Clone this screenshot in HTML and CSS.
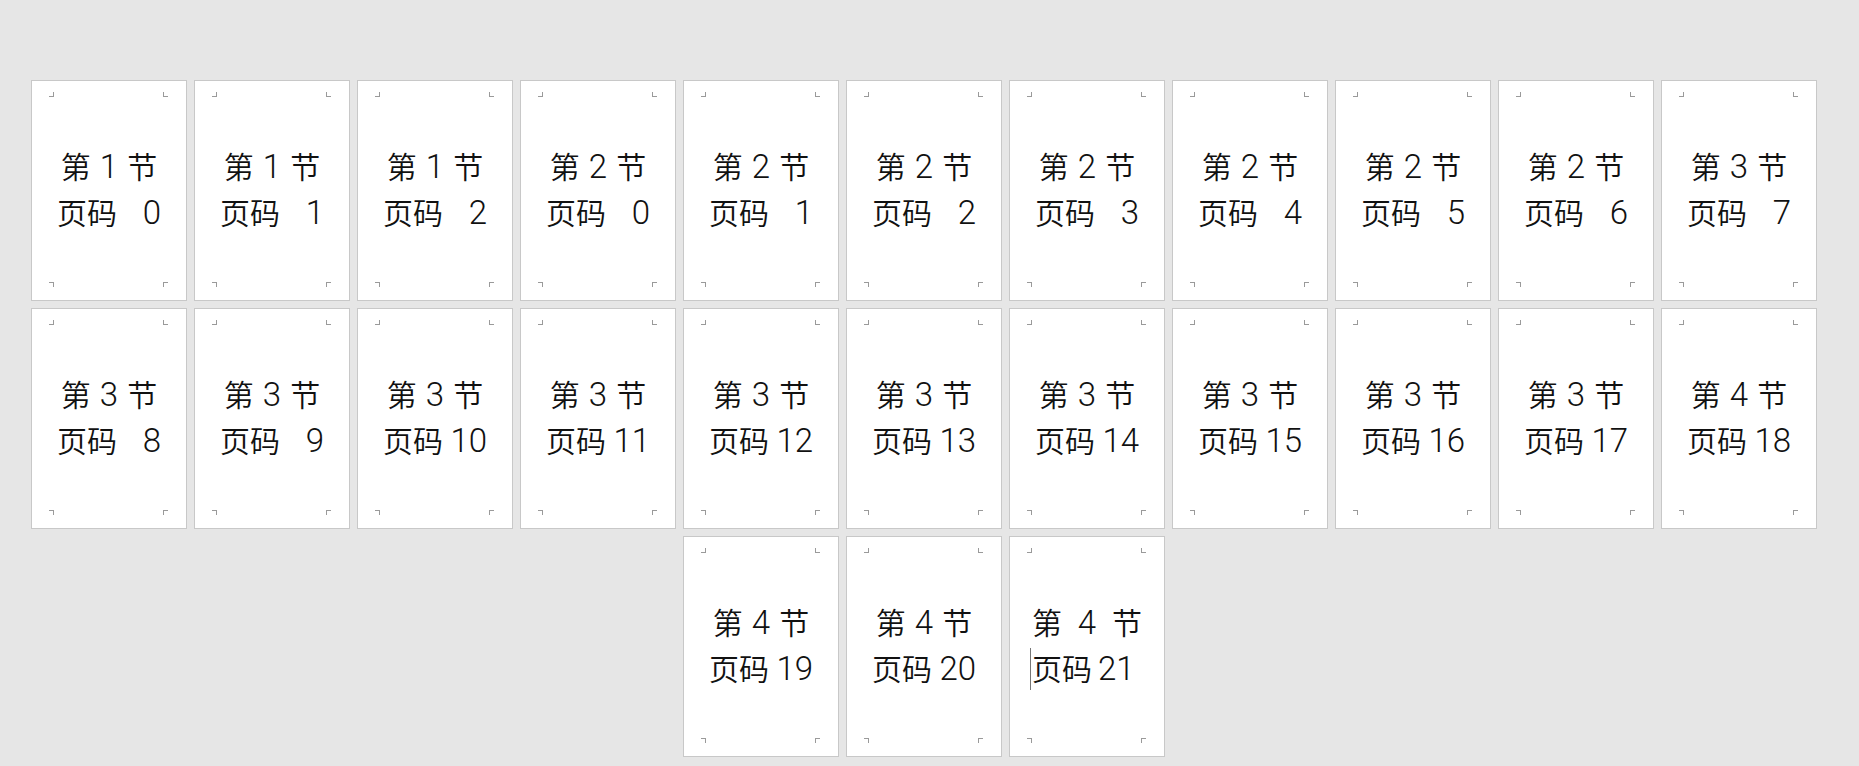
FILE: index.html
```html
<!DOCTYPE html>
<html lang="zh-CN">
<head>
<meta charset="utf-8">
<title>页面预览</title>
<link rel="stylesheet" href="styles.css">
</head>
<body>
<div class="sheet">
  <div class="page"><i class="mk tl"></i><i class="mk tr"></i><i class="mk bl"></i><i class="mk br"></i><div class="txt"><div class="l1"><span>第</span><b>1</b><span>节</span></div><div class="l2"><span>页码</span><b>0</b></div></div></div>
  <div class="page"><i class="mk tl"></i><i class="mk tr"></i><i class="mk bl"></i><i class="mk br"></i><div class="txt"><div class="l1"><span>第</span><b>1</b><span>节</span></div><div class="l2"><span>页码</span><b>1</b></div></div></div>
  <div class="page"><i class="mk tl"></i><i class="mk tr"></i><i class="mk bl"></i><i class="mk br"></i><div class="txt"><div class="l1"><span>第</span><b>1</b><span>节</span></div><div class="l2"><span>页码</span><b>2</b></div></div></div>
  <div class="page"><i class="mk tl"></i><i class="mk tr"></i><i class="mk bl"></i><i class="mk br"></i><div class="txt"><div class="l1"><span>第</span><b>2</b><span>节</span></div><div class="l2"><span>页码</span><b>0</b></div></div></div>
  <div class="page"><i class="mk tl"></i><i class="mk tr"></i><i class="mk bl"></i><i class="mk br"></i><div class="txt"><div class="l1"><span>第</span><b>2</b><span>节</span></div><div class="l2"><span>页码</span><b>1</b></div></div></div>
  <div class="page"><i class="mk tl"></i><i class="mk tr"></i><i class="mk bl"></i><i class="mk br"></i><div class="txt"><div class="l1"><span>第</span><b>2</b><span>节</span></div><div class="l2"><span>页码</span><b>2</b></div></div></div>
  <div class="page"><i class="mk tl"></i><i class="mk tr"></i><i class="mk bl"></i><i class="mk br"></i><div class="txt"><div class="l1"><span>第</span><b>2</b><span>节</span></div><div class="l2"><span>页码</span><b>3</b></div></div></div>
  <div class="page"><i class="mk tl"></i><i class="mk tr"></i><i class="mk bl"></i><i class="mk br"></i><div class="txt"><div class="l1"><span>第</span><b>2</b><span>节</span></div><div class="l2"><span>页码</span><b>4</b></div></div></div>
  <div class="page"><i class="mk tl"></i><i class="mk tr"></i><i class="mk bl"></i><i class="mk br"></i><div class="txt"><div class="l1"><span>第</span><b>2</b><span>节</span></div><div class="l2"><span>页码</span><b>5</b></div></div></div>
  <div class="page"><i class="mk tl"></i><i class="mk tr"></i><i class="mk bl"></i><i class="mk br"></i><div class="txt"><div class="l1"><span>第</span><b>2</b><span>节</span></div><div class="l2"><span>页码</span><b>6</b></div></div></div>
  <div class="page"><i class="mk tl"></i><i class="mk tr"></i><i class="mk bl"></i><i class="mk br"></i><div class="txt"><div class="l1"><span>第</span><b>3</b><span>节</span></div><div class="l2"><span>页码</span><b>7</b></div></div></div>

  <div class="page"><i class="mk tl"></i><i class="mk tr"></i><i class="mk bl"></i><i class="mk br"></i><div class="txt"><div class="l1"><span>第</span><b>3</b><span>节</span></div><div class="l2"><span>页码</span><b>8</b></div></div></div>
  <div class="page"><i class="mk tl"></i><i class="mk tr"></i><i class="mk bl"></i><i class="mk br"></i><div class="txt"><div class="l1"><span>第</span><b>3</b><span>节</span></div><div class="l2"><span>页码</span><b>9</b></div></div></div>
  <div class="page"><i class="mk tl"></i><i class="mk tr"></i><i class="mk bl"></i><i class="mk br"></i><div class="txt"><div class="l1"><span>第</span><b>3</b><span>节</span></div><div class="l2"><span>页码</span><b>10</b></div></div></div>
  <div class="page"><i class="mk tl"></i><i class="mk tr"></i><i class="mk bl"></i><i class="mk br"></i><div class="txt"><div class="l1"><span>第</span><b>3</b><span>节</span></div><div class="l2"><span>页码</span><b>11</b></div></div></div>
  <div class="page"><i class="mk tl"></i><i class="mk tr"></i><i class="mk bl"></i><i class="mk br"></i><div class="txt"><div class="l1"><span>第</span><b>3</b><span>节</span></div><div class="l2"><span>页码</span><b>12</b></div></div></div>
  <div class="page"><i class="mk tl"></i><i class="mk tr"></i><i class="mk bl"></i><i class="mk br"></i><div class="txt"><div class="l1"><span>第</span><b>3</b><span>节</span></div><div class="l2"><span>页码</span><b>13</b></div></div></div>
  <div class="page"><i class="mk tl"></i><i class="mk tr"></i><i class="mk bl"></i><i class="mk br"></i><div class="txt"><div class="l1"><span>第</span><b>3</b><span>节</span></div><div class="l2"><span>页码</span><b>14</b></div></div></div>
  <div class="page"><i class="mk tl"></i><i class="mk tr"></i><i class="mk bl"></i><i class="mk br"></i><div class="txt"><div class="l1"><span>第</span><b>3</b><span>节</span></div><div class="l2"><span>页码</span><b>15</b></div></div></div>
  <div class="page"><i class="mk tl"></i><i class="mk tr"></i><i class="mk bl"></i><i class="mk br"></i><div class="txt"><div class="l1"><span>第</span><b>3</b><span>节</span></div><div class="l2"><span>页码</span><b>16</b></div></div></div>
  <div class="page"><i class="mk tl"></i><i class="mk tr"></i><i class="mk bl"></i><i class="mk br"></i><div class="txt"><div class="l1"><span>第</span><b>3</b><span>节</span></div><div class="l2"><span>页码</span><b>17</b></div></div></div>
  <div class="page"><i class="mk tl"></i><i class="mk tr"></i><i class="mk bl"></i><i class="mk br"></i><div class="txt"><div class="l1"><span>第</span><b>4</b><span>节</span></div><div class="l2"><span>页码</span><b>18</b></div></div></div>

  <div class="page"><i class="mk tl"></i><i class="mk tr"></i><i class="mk bl"></i><i class="mk br"></i><div class="txt"><div class="l1"><span>第</span><b>4</b><span>节</span></div><div class="l2"><span>页码</span><b>19</b></div></div></div>
  <div class="page"><i class="mk tl"></i><i class="mk tr"></i><i class="mk bl"></i><i class="mk br"></i><div class="txt"><div class="l1"><span>第</span><b>4</b><span>节</span></div><div class="l2"><span>页码</span><b>20</b></div></div></div>
  <div class="page current"><i class="mk tl"></i><i class="mk tr"></i><i class="mk bl"></i><i class="mk br"></i><div class="txt"><div class="l1"><span>第</span><b>4</b><span>节</span></div><div class="l2"><i class="caret"></i><span>页码</span><b>21</b></div></div></div>
</div>
</body>
</html>
```

FILE: styles.css
```css
html, body {
  margin: 0;
  padding: 0;
  background: #e6e6e6;
}
body {
  width: 1859px;
  height: 766px;
  overflow: hidden;
  font-family: "Noto Sans CJK SC", "Noto Sans", sans-serif;
  color: #111;
}
.sheet {
  box-sizing: border-box;
  width: 1817px;
  padding: 80px 0 0 31px;
  display: flex;
  flex-wrap: wrap;
  justify-content: center;
  gap: 7px;
}
.page {
  position: relative;
  box-sizing: border-box;
  width: 156px;
  height: 221px;
  background: #fff;
  border: 1px solid #c8c8c8;
  display: flex;
  align-items: center;
  justify-content: center;
}
.mk {
  position: absolute;
  width: 5px;
  height: 5px;
  box-sizing: border-box;
  border: 0 solid #9a9a9a;
}
.mk.tl { left: 17px; top: 11px; border-right-width: 1px; border-bottom-width: 1px; }
.mk.tr { left: 131px; top: 11px; border-left-width: 1px; border-bottom-width: 1px; }
.mk.bl { left: 17px; top: 201px; border-right-width: 1px; border-top-width: 1px; }
.mk.br { left: 131px; top: 201px; border-left-width: 1px; border-top-width: 1px; }

.txt {
  width: 110px;
  margin-top: -3px;
  display: flex;
  flex-direction: column;
  align-items: center;
  font-size: 30px;
  font-weight: 350;
  line-height: 45px;
}
.l1, .l2 {
  display: flex;
  align-items: baseline;
  white-space: nowrap;
}
.l1 b, .l2 b {
  font-family: "Roboto", "Liberation Sans", sans-serif;
  font-weight: 300;
  font-size: 33px;
}
.l1 b {
  margin: 0 9px;
}
.l2 b {
  width: 44px;
  text-align: right;
}
.current .txt {
  align-items: stretch;
}
.current .l1 {
  justify-content: space-between;
}
.current .l1 b { margin: 0; }
.current .l2 {
  position: relative;
}
.current .l2 b {
  width: auto;
  margin-left: 6px;
}
.caret {
  position: absolute;
  left: -2px;
  top: 3px;
  width: 1px;
  height: 42px;
  background: #777;
}
```
